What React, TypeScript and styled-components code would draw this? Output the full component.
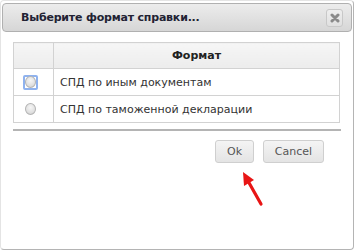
import React from "react";
import styled, { createGlobalStyle } from "styled-components";

const Global = createGlobalStyle`
  html, body { margin: 0; padding: 0; background: #fff; }
  body { font-family: "DejaVu Sans", Verdana, sans-serif; }
`;

const Dialog = styled.div`
  position: relative;
  box-sizing: border-box;
  width: 354px;
  height: 250px;
  border: 1px solid #b4b4b4;
  border-left-color: #e4e4e4;
  border-top-color: #e4e4e4;
  border-radius: 4px;
  padding: 2px 1px 0 1px;
  background: #fff;
  display: flex;
  flex-direction: column;
`;

const TitleBar = styled.div`
  box-sizing: border-box;
  height: 29px;
  border: 1px solid #b0b0b0;
  border-radius: 4px;
  background: linear-gradient(#ececec, #d6d6d6);
  display: flex;
  align-items: center;
  justify-content: space-between;
  padding: 0 8px 0 18px;
`;

const Title = styled.span`
  font-family: "DejaVu Sans", Verdana, sans-serif;
  font-weight: bold;
  font-size: 11px;
  letter-spacing: -0.2px;
  color: #222233;
`;

const CloseBtn = styled.div`
  box-sizing: border-box;
  width: 17px;
  height: 18px;
  border: 1px solid #c8c8c8;
  border-radius: 3px;
  background: linear-gradient(#eeeeee, #e0e0e0);
  display: flex;
  align-items: center;
  justify-content: center;
`;

const Body = styled.div`
  padding: 10px 11px 0 11px;
  display: flex;
  flex-direction: column;
`;

const Table = styled.table`
  width: 327px;
  border-collapse: collapse;
  border: 1px solid #d2d2d2;
  font-family: "DejaVu Sans", Verdana, sans-serif;
  font-size: 11px;
  color: #333;
`;

const HeadCell = styled.th<{ $narrow?: boolean }>`
  box-sizing: border-box;
  height: 26px;
  border: 1px solid #d2d2d2;
  background: linear-gradient(#f6f6f6, #ececec);
  font-weight: bold;
  font-size: 11px;
  color: #222;
  text-align: center;
  padding: 0;
  width: ${(p) => (p.$narrow ? "40px" : "auto")};
`;

const Cell = styled.td<{ $radio?: boolean }>`
  box-sizing: border-box;
  height: 27px;
  border: 1px solid #d2d2d2;
  padding: ${(p) => (p.$radio ? "0 0 0 9px" : "0 0 0 6px")};
  vertical-align: middle;
`;

const RadioWrap = styled.div<{ $focus?: boolean }>`
  box-sizing: border-box;
  width: 15px;
  height: 15px;
  border-radius: 2px;
  border: 2px solid ${(p) => (p.$focus ? "#8fb2ee" : "transparent")};
  display: flex;
  align-items: center;
  justify-content: center;
`;

const Radio = styled.div`
  box-sizing: border-box;
  width: 12px;
  height: 12px;
  border-radius: 50%;
  border: 1px solid #b4b4b4;
  background: radial-gradient(circle at 50% 35%, #f6f6f6, #d2d2d2);
`;

const Separator = styled.div`
  width: 328px;
  height: 2px;
  margin-top: 6px;
  background: #b4b4b4;
`;

const Buttons = styled.div`
  display: flex;
  justify-content: flex-end;
  gap: 9px;
  width: 328px;
  padding-right: 17px;
  box-sizing: border-box;
  margin-top: 9px;
`;

const Button = styled.button<{ $w: number }>`
  box-sizing: border-box;
  width: ${(p) => p.$w}px;
  height: 23px;
  border: 1px solid #cfcfcf;
  border-radius: 3px;
  background: linear-gradient(#f4f4f4, #e4e4e4);
  font-family: "DejaVu Sans", Verdana, sans-serif;
  font-size: 11px;
  color: #555;
  padding: 0;
`;

const Arrow = styled.svg`
  position: absolute;
  left: 236px;
  top: 166px;
`;

const rows = ["СПД по иным документам", "СПД по таможенной декларации"];

export default function App() {
  return (
    <>
      <Global />
      <Dialog>
        <TitleBar>
          <Title>Выберите формат справки...</Title>
          <CloseBtn>
            <svg width="10" height="10" viewBox="0 0 10 10">
              <path d="M2 2 L8 8 M8 2 L2 8" stroke="#8a8a8a" strokeWidth="3" strokeLinecap="round" />
            </svg>
          </CloseBtn>
        </TitleBar>
        <Body>
          <Table>
            <thead>
              <tr>
                <HeadCell $narrow />
                <HeadCell>Формат</HeadCell>
              </tr>
            </thead>
            <tbody>
              {rows.map((r, i) => (
                <tr key={r}>
                  <Cell $radio>
                    <RadioWrap $focus={i === 0}>
                      <Radio />
                    </RadioWrap>
                  </Cell>
                  <Cell>{r}</Cell>
                </tr>
              ))}
            </tbody>
          </Table>
          <Separator />
          <Buttons>
            <Button $w={39}>Ok</Button>
            <Button $w={61}>Cancel</Button>
          </Buttons>
        </Body>
        <Arrow width="30" height="42" viewBox="0 0 30 42">
          <line x1="24" y1="37" x2="11" y2="14" stroke="#e81515" strokeWidth="3.2" strokeLinecap="round" />
          <polygon points="6,5 17,13 7,19" fill="#e81515" />
        </Arrow>
      </Dialog>
    </>
  );
}
